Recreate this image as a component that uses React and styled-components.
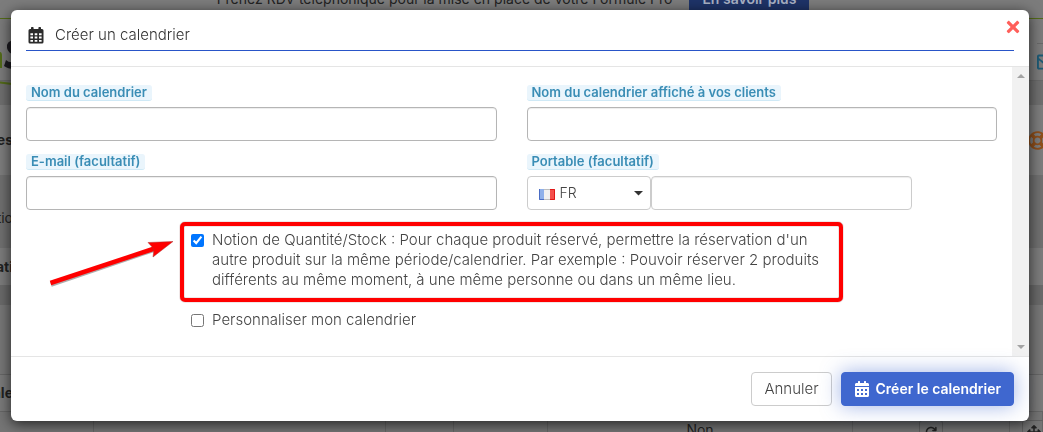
import React from 'react';
import styled, { createGlobalStyle } from 'styled-components';
import { FaCalendarAlt, FaTimes, FaArrowsAlt, FaRegLifeRing, FaRegEnvelope } from 'react-icons/fa';
import { FaArrowRotateRight } from 'react-icons/fa6';

export default function App() {
  return (
    <>
      <GlobalStyle />
      <BackgroundPage />
      <Overlay>
        <CalendarModal />
      </Overlay>
    </>
  );
}

function CalendarModal() {
  const [stock, setStock] = React.useState(true);
  const [custom, setCustom] = React.useState(false);

  return (
    <Modal role="dialog" aria-modal="true" aria-labelledby="modal-title">
      <ModalHeader>
        <ModalTitle id="modal-title">
          <CalendarIcon />
          Créer un calendrier
        </ModalTitle>
        <CloseButton type="button" aria-label="Fermer">
          <FaTimes size={18} />
        </CloseButton>
      </ModalHeader>

      <ModalBody>
        <Form>
          <FieldGrid>
            <Field>
              <Label htmlFor="name">Nom du calendrier</Label>
              <Input id="name" type="text" />
            </Field>
            <Field>
              <Label htmlFor="public-name">Nom du calendrier affiché à vos clients</Label>
              <Input id="public-name" type="text" />
            </Field>
            <Field>
              <Label htmlFor="email">E-mail (facultatif)</Label>
              <Input id="email" type="email" />
            </Field>
            <Field>
              <Label htmlFor="phone">Portable (facultatif)</Label>
              <PhoneGroup>
                <CountryWrapper>
                  <Flag />
                  <CountrySelect aria-label="Pays" defaultValue="FR">
                    <option>FR</option>
                  </CountrySelect>
                  <Caret />
                </CountryWrapper>
                <Input id="phone" type="tel" $light />
              </PhoneGroup>
            </Field>
          </FieldGrid>

          <Options>
            <Option $marked>
              <Checkbox
                type="checkbox"
                checked={stock}
                onChange={() => setStock(!stock)}
              />
              <span>
                Notion de Quantité/Stock : Pour chaque produit réservé, permettre la réservation d'un
                <br />
                autre produit sur la même période/calendrier. Par exemple : Pouvoir réserver 2 produits
                <br />
                différents au même moment, à une même personne ou dans un même lieu.
              </span>
              <Arrow />
            </Option>
            <Option>
              <Checkbox
                type="checkbox"
                checked={custom}
                onChange={() => setCustom(!custom)}
              />
              <span>Personnaliser mon calendrier</span>
            </Option>
          </Options>
        </Form>
        <ScrollTrack aria-hidden="true">
          <ScrollArrow />
          <ScrollArrow $down />
        </ScrollTrack>
      </ModalBody>

      <ModalFooter>
        <Button type="button">Annuler</Button>
        <Button type="submit" $primary>
          <FaCalendarAlt size={16} />
          Créer le calendrier
        </Button>
      </ModalFooter>
    </Modal>
  );
}

function BackgroundPage() {
  return (
    <Page>
      <Banner>
        <span>Prenez RDV téléphonique pour la mise en place de votre Formule Pro</span>
        <BannerLink href="#pro">En savoir plus</BannerLink>
      </Banner>
      <Brand>
        <Logo />
        <Mail>
          <FaRegEnvelope size={20} />
        </Mail>
      </Brand>
      <Strip $height={24} $color="#6f6f6f" />
      <Strip $height={70} $color="#7d7d7d">
        <Cut $bold>es</Cut>
        <Help>
          <FaRegLifeRing size={19} />
        </Help>
      </Strip>
      <Strip $height={73} $color="#707070" $align="end">
        <Cut>tio</Cut>
      </Strip>
      <Strip $height={57} $color="#7c7c7c" $shade>
        <Cut $bold>ati</Cut>
      </Strip>
      <Strip $height={69} $color="#777777" />
      <Strip $height={38} $color="#7a7a7a" $lined>
        <Cut $bold>ale</Cut>
      </Strip>
      <Table>
        <colgroup>
          <col width="9%" />
          <col width="28%" />
          <col width="6.5%" />
          <col width="9%" />
          <col width="29.3%" />
          <col width="15%" />
          <col />
        </colgroup>
        <tbody>
          <tr>
            <td />
            <td />
            <td />
            <td />
            <td>Non</td>
            <td>
              <RowButton type="button" aria-label="Actualiser">
                <FaArrowRotateRight size={12} />
              </RowButton>
            </td>
            <td>
              <RowButton type="button" aria-label="Déplacer">
                <FaArrowsAlt size={14} />
              </RowButton>
            </td>
          </tr>
        </tbody>
      </Table>
    </Page>
  );
}

const CalendarIcon = () => (
  <svg width="16" height="17" viewBox="0 0 16 17" aria-hidden="true">
    <path
      fill="#2b2b2b"
      fillRule="evenodd"
      d="M3 .8q0-.8.8-.8h1q.8 0 .8.8V2h4.800V.8q0-.8.8-.8h1q.8 0 .8.8V2H14q1.500 0 1.500 1.500V15q0 1.500-1.500 1.500H2Q.5 16.500.5 15V3.500Q.5 2 2 2h1z
      M2.400 6.200v2h2.600v-2z M6.700 6.200v2h2.600v-2z M11 6.200v2h2.600v-2z
      M2.400 9.600v2h2.600v-2z M6.700 9.600v2h2.600v-2z M11 9.600v2h2.600v-2z
      M2.400 13v1.800h2.600V13z M6.700 13v1.800h2.600V13z M11 13v1.800h2.600V13z"
    />
  </svg>
);

const Flag = () => (
  <FlagSvg width="16" height="11" viewBox="0 0 16 11" aria-hidden="true">
    <rect width="6" height="11" fill="#8fb0ea" />
    <rect x="5" width="6" height="11" fill="#f0f0f0" />
    <rect x="11" width="5" height="11" fill="#f4504c" />
    <path d="M.5 0v10.500H6" fill="none" stroke="#4a6cc4" />
    <path d="M11 .5h4.500v10H11" fill="none" stroke="#e01818" />
    <path d="M5 .5h6M5 10.500h6" fill="none" stroke="#bdbdbd" />
  </FlagSvg>
);

const Caret = () => (
  <CaretSvg width="10" height="5" viewBox="0 0 10 5" aria-hidden="true">
    <path d="M0 0h9L4.500 4.500z" fill="#333" />
  </CaretSvg>
);

const Arrow = () => (
  <ArrowSvg width="126" height="50" viewBox="0 0 126 50" aria-hidden="true">
    <path d="M2 46.500 107 11" stroke="#777" strokeWidth="4.500" opacity=".6" />
    <path d="M1.500 45 107 10" stroke="#f00" strokeWidth="4.500" />
    <path d="M99 4.500 124 3.500 104 19l1-8z" fill="#f00" stroke="#a33" strokeWidth=".5" />
  </ArrowSvg>
);

const Logo = () => (
  <svg width="20" height="66" viewBox="0 0 20 66" aria-hidden="true">
    <path d="M0 33q2 0 2 4v12H-2V33z" fill="#536b18" />
    <path d="M14 21q-8 1-7 8 1 5 7 7v7q-5 1-8-2l-2 6q4 3 10 3V21z" fill="#1d1b20" />
    <path d="M0 63.500 12 65" stroke="#536b18" strokeWidth="2" />
  </svg>
);

const GlobalStyle = createGlobalStyle`
  *, *::before, *::after {
    box-sizing: border-box;
  }

  body {
    margin: 0;
    background: #777;
    color: #444;
    font-family: Inter, "Open Sans", sans-serif;
    font-size: 15px;
    font-weight: 300;
    line-height: 20px;
  }

  button, input, select {
    font: inherit;
    color: inherit;
  }
`;

/* Modal */

const Overlay = styled.div`
  position: fixed;
  inset: 0;
  padding: 10px 14px 10px 11px;
  overflow: hidden;
`;

const Modal = styled.section`
  position: relative;
  background: #fff;
  border-radius: 6px;
  box-shadow: 0 3px 14px rgba(0, 0, 0, 0.7);
`;

const ModalHeader = styled.header`
  padding: 15px;
  border-bottom: 1px solid #e5e5e5;
`;

const ModalTitle = styled.h4`
  display: flex;
  align-items: center;
  gap: 11px;
  margin: 0;
  padding: 0 2px 5px;
  border-bottom: 1px solid #2955c8;
  font-size: 15px;
  font-weight: 300;
  color: #333;
`;

const CloseButton = styled.button`
  position: absolute;
  top: 8px;
  right: 7px;
  display: flex;
  padding: 0;
  border: 0;
  background: none;
  color: #ff5f5a;
  cursor: pointer;
`;

const ModalBody = styled.div`
  display: grid;
  grid-template-columns: 1fr 17px;
`;

const Form = styled.div`
  padding: 18px 15px 26px;
`;

const FieldGrid = styled.div`
  display: grid;
  grid-template-columns: 1fr 1fr;
  gap: 13px 30px;
`;

const Field = styled.div`
  display: flex;
  flex-direction: column;
  align-items: flex-start;
  gap: 6px;
`;

const Label = styled.label`
  padding: 0 5px;
  border-bottom: 1px solid #cfe9f6;
  border-radius: 3px;
  background: #eaf5fc;
  color: #3a8db5;
  font-size: 13px;
  font-weight: 600;
  line-height: 15px;
`;

const Input = styled.input`
  width: 100%;
  height: 34px;
  padding: 6px 12px;
  border: 1px solid ${(props) => (props.$light ? '#ccc' : '#b5b5b5')};
  border-radius: 4px;
  background: #fff;
  box-shadow: inset 0 1px 1px rgba(0, 0, 0, 0.075);
`;

const PhoneGroup = styled.div`
  display: grid;
  grid-template-columns: 124px 1fr;
  width: 82%;
`;

const CountryWrapper = styled.div`
  position: relative;
`;

const CountrySelect = styled.select`
  width: 100%;
  height: 34px;
  padding: 6px 12px 6px 32px;
  border: 1px solid #ccc;
  border-radius: 4px;
  background: #fff;
  font-size: 14px;
  appearance: none;
`;

const FlagSvg = styled.svg`
  position: absolute;
  top: 13px;
  left: 12px;
`;

const CaretSvg = styled.svg`
  position: absolute;
  top: 15px;
  right: 7px;
`;

const Options = styled.div`
  display: grid;
  gap: 20px;
  margin: 20px 17% 0;
`;

const Option = styled.label`
  position: relative;
  display: flex;
  gap: 8px;
  white-space: nowrap;

  /* red frame drawn around the option */
  &::before {
    content: '';
    display: ${(props) => (props.$marked ? 'block' : 'none')};
    position: absolute;
    inset: -8px -11px -12px;
    border: 4px solid #f00;
    border-radius: 5px;
    box-shadow: 0 0 1px #600, inset 0 0 1px #600;
    pointer-events: none;
  }
`;

const Checkbox = styled.input`
  flex: none;
  width: 13px;
  height: 13px;
  margin: 4px 0 0;
`;

const ArrowSvg = styled.svg`
  position: absolute;
  top: 8px;
  left: -142px;
`;

const ScrollTrack = styled.div`
  display: flex;
  flex-direction: column;
  justify-content: space-between;
  align-items: center;
  padding: 7px 0;
  background: #f1f1f1;
`;

const ScrollArrow = styled.i`
  border: 4px solid transparent;
  border-top: ${(props) => (props.$down ? '4px solid #a3a3a3' : '0')};
  border-bottom: ${(props) => (props.$down ? '0' : '4px solid #a3a3a3')};
`;

const ModalFooter = styled.footer`
  display: flex;
  justify-content: flex-end;
  gap: 9px;
  padding: 15px;
  border-top: 1px solid #e5e5e5;
`;

const Button = styled.button`
  display: flex;
  align-items: center;
  gap: 6px;
  height: 34px;
  padding: 6px 12px;
  border: 1px solid ${(props) => (props.$primary ? '#3f67cf' : '#ccc')};
  border-radius: 4px;
  background: ${(props) => (props.$primary ? '#3f67cf' : '#fff')};
  box-shadow: ${(props) => (props.$primary ? '0 0 20px rgba(63, 103, 207, 0.5)' : 'none')};
  color: ${(props) => (props.$primary ? '#fff' : '#444')};
  font-size: ${(props) => (props.$primary ? 14 : 15)}px;
  font-weight: ${(props) => (props.$primary ? 600 : 300)};
  cursor: pointer;
`;

/* Page behind the modal */

const Page = styled.div`
  height: 100vh;
  overflow: hidden;
  color: #222;
  font-size: 14px;
  font-weight: 400;
`;

const Banner = styled.div`
  display: flex;
  justify-content: center;
  align-items: flex-end;
  gap: 17px;
  height: 19px;
  padding: 0 17px 9px 0;
  border-bottom: 1px solid #536b18;
  background: #7c7c7c;
  overflow: hidden;
`;

const BannerLink = styled.a`
  margin-bottom: -9px;
  padding: 7px 13px 9px;
  background: #1e3368;
  color: #a9b1c4;
  font-size: 14px;
  font-weight: 600;
  text-decoration: none;
`;

const Brand = styled.div`
  display: flex;
  justify-content: space-between;
  height: 62px;
  background: #7b7b7b;
  border-bottom: 1px solid #696969;
`;

const Mail = styled.div`
  display: flex;
  align-items: center;
  width: 6px;
  margin-top: 24px;
  border-top: 1px solid #696969;
  color: #1d5a75;

  svg {
    flex: none;
  }
`;

const Strip = styled.div`
  display: flex;
  justify-content: space-between;
  align-items: ${(props) => props.$align || 'center'};
  height: ${(props) => props.$height}px;
  padding-bottom: ${(props) => (props.$align ? 20 : 0)}px;
  border: 0 solid #666;
  border-width: ${(props) => (props.$lined ? '1px 0' : '0')};
  background: ${(props) => props.$color};
  ${(props) => props.$shade && 'border-bottom: 20px solid #6a6a6a;'}
`;

const Cut = styled.span`
  display: flex;
  justify-content: flex-end;
  width: 13px;
  font-weight: ${(props) => (props.$bold ? 700 : 400)};
`;

const Help = styled.div`
  display: flex;
  width: 15px;
  color: #8f4f1b;

  svg {
    flex: none;
  }
`;

const Table = styled.table`
  width: 100%;
  table-layout: fixed;
  border-collapse: collapse;
  background: #757575;

  td {
    height: 36px;
    padding: 8px 0 0;
    border-right: 1px solid #666;
    text-align: center;
    vertical-align: top;
  }

  td:last-child {
    padding-left: 12px;
    text-align: left;
  }
`;

const RowButton = styled.button`
  display: inline-flex;
  justify-content: center;
  align-items: center;
  width: 24px;
  height: 24px;
  padding: 0;
  border: 1px solid #606060;
  border-radius: 3px;
  background: none;
`;
